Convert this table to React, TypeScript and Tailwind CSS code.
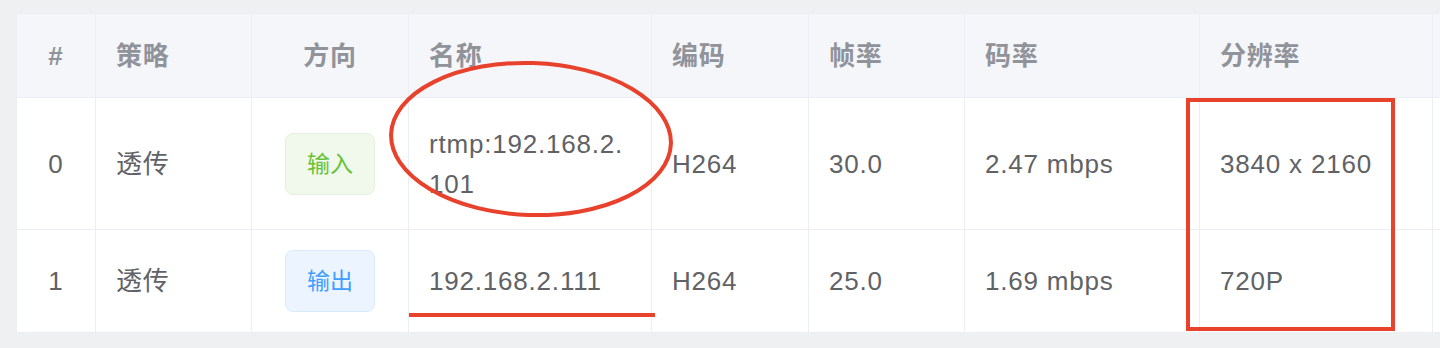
import type React from "react";

const font = { fontFamily: '"Liberation Sans", "Noto Sans CJK SC", sans-serif' };

type Row = {
  idx: string;
  policy: string;
  dir: "in" | "out";
  name: string;
  codec: string;
  fps: string;
  bitrate: string;
  res: string;
};

const rows: Row[] = [
  { idx: "0", policy: "透传", dir: "in", name: "rtmp:192.168.2.101", codec: "H264", fps: "30.0", bitrate: "2.47 mbps", res: "3840 x 2160" },
  { idx: "1", policy: "透传", dir: "out", name: "192.168.2.111", codec: "H264", fps: "25.0", bitrate: "1.69 mbps", res: "720P" },
];

const Tag: React.FC<{ dir: "in" | "out" }> = ({ dir }) =>
  dir === "in" ? (
    <span className="inline-flex h-[62px] items-center rounded-lg border border-[#e1f3d8] bg-[#f0f9eb] px-[21px] text-[23px] tracking-normal text-[#67c23a]">
      输入
    </span>
  ) : (
    <span className="inline-flex h-[62px] items-center rounded-lg border border-[#d9ecff] bg-[#ecf5ff] px-[21px] text-[23px] tracking-normal text-[#409eff]">
      输出
    </span>
  );

const th = "border-r border-b border-[#ebeef5] px-[20px] font-semibold text-[#909399]";
const td = "border-r border-b border-[#ebeef5] px-[20px] text-[#606266]";

export default function App() {
  return (
    <div className="relative h-[348px] w-[1440px] overflow-hidden bg-[#eff0f2] pt-[13px] pl-[16px]" style={font}>
      <table className="w-[1520px] table-fixed border-collapse border-l border-t border-[#ebeef5] bg-white text-[26px] leading-[40px] tracking-[0.8px]">
        <colgroup>
          <col className="w-[79px]" />
          <col className="w-[156px]" />
          <col className="w-[157px]" />
          <col className="w-[243px]" />
          <col className="w-[157px]" />
          <col className="w-[156px]" />
          <col className="w-[235px]" />
          <col className="w-[233px]" />
          <col />
        </colgroup>
        <thead>
          <tr className="h-[84px] bg-[#f4f6fa]">
            <th className={`${th} text-center`}>#</th>
            <th className={`${th} text-left`}>策略</th>
            <th className={`${th} text-center`}>方向</th>
            <th className={`${th} text-left`}>名称</th>
            <th className={`${th} text-left`}>编码</th>
            <th className={`${th} text-left`}>帧率</th>
            <th className={`${th} text-left`}>码率</th>
            <th className={`${th} text-left`}>分辨率</th>
            <th className={th}></th>
          </tr>
        </thead>
        <tbody>
          {rows.map((r, i) => (
            <tr key={r.idx} className={i === 0 ? "h-[132px]" : "h-[103px]"}>
              <td className={`${td} text-center`}>{r.idx}</td>
              <td className={td}>{r.policy}</td>
              <td className={`${td} text-center`}>
                <Tag dir={r.dir} />
              </td>
              <td className={`${td} break-all`}>{r.name}</td>
              <td className={td}>{r.codec}</td>
              <td className={td}>{r.fps}</td>
              <td className={td}>{r.bitrate}</td>
              <td className={td}>{r.res}</td>
              <td className={td}></td>
            </tr>
          ))}
        </tbody>
      </table>

      {/* red annotation marks drawn over the table */}
      <svg className="pointer-events-none absolute inset-0" width="1440" height="348" viewBox="0 0 1440 348">
        <ellipse cx="531" cy="139" rx="140" ry="76" fill="none" stroke="#e8412c" strokeWidth="4" transform="rotate(2 531 139)" />
        <line x1="409" y1="315" x2="655" y2="315" stroke="#e8412c" strokeWidth="4" />
        <rect x="1188" y="100" width="205" height="229" fill="none" stroke="#e8412c" strokeWidth="4" />
      </svg>
    </div>
  );
}
